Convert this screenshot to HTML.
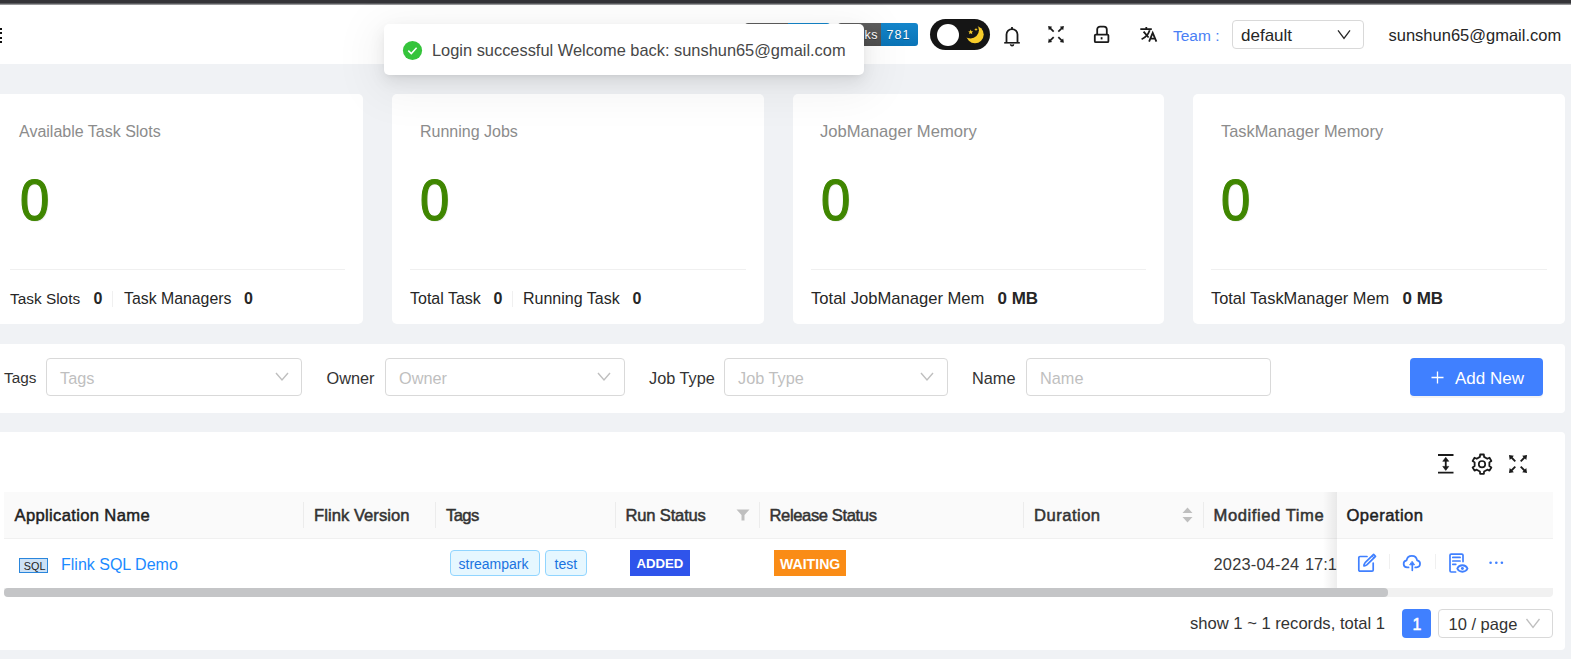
<!DOCTYPE html>
<html><head><meta charset="utf-8">
<style>
*{box-sizing:border-box;margin:0;padding:0}
html,body{width:1571px;height:659px;overflow:hidden;background:#f0f2f5;font-family:"Liberation Sans",sans-serif;color:rgba(0,0,0,.85)}
.a{position:absolute}
.t{position:absolute;white-space:nowrap;line-height:1}
.topbar{left:0;top:0;width:1571px;height:5px;background:linear-gradient(#343438 0,#343438 3px,#5c5d61 3px,#56575b 4px,#d8d8d8 5px)}
.header{left:0;top:5px;width:1571px;height:59px;background:#fff}
.card{background:#fff;border-radius:5px;top:94px;height:230px}
.ctitle{font-size:16px;color:#8c8c8c}
.cbig{font-size:57px;color:#3f8600;-webkit-text-stroke:1.2px #3f8600;text-shadow:1px 1px 1px rgba(0,0,0,.12);transform:scaleX(.925);transform-origin:0 0}
.cdiv{height:1px;background:#f0f0f0;top:269px}
.cfoot{font-size:16px;color:#262626}
.b{font-weight:bold}
.sel{border:1px solid #d9d9d9;border-radius:4px;background:#fff}
.ph{color:#bfbfbf;font-size:16.3px}
.lbl{font-size:16.3px;color:#333}
.th{font-size:16.6px;color:#333;-webkit-text-stroke:.5px currentColor;letter-spacing:.25px}
.sep{width:1px;background:#ececec}
</style></head>
<body>
<div class="a topbar"></div>
<div class="a header"></div>
<!-- hamburger sliver -->
<div class="a" style="left:0;top:27.9px;width:2px;height:1.7px;background:#111"></div>
<div class="a" style="left:0;top:32.4px;width:2px;height:1.7px;background:#111"></div>
<div class="a" style="left:0;top:36.9px;width:2px;height:1.7px;background:#111"></div>
<div class="a" style="left:0;top:41.4px;width:2px;height:1.7px;background:#111"></div>

<!-- badges behind toast -->
<div class="a" style="left:745px;top:23px;width:43px;height:23px;background:linear-gradient(#5e5e5e,#4e4e4e);border-radius:3px 0 0 3px"></div>
<div class="a" style="left:788px;top:23px;width:42px;height:23px;background:linear-gradient(#1486cb,#0a73b6);border-radius:0 3px 3px 0"></div>
<div class="a" style="left:838px;top:23px;width:43px;height:23px;background:linear-gradient(#5e5e5e,#4e4e4e);border-radius:3px 0 0 3px"></div>
<div class="a" style="left:881px;top:23px;width:37px;height:23px;background:linear-gradient(#1486cb,#0a73b6);border-radius:0 3px 3px 0"></div>
<div class="t" style="left:848px;top:28.5px;font-size:12.5px;letter-spacing:.6px;color:#fff;text-shadow:0 1px 0 rgba(1,1,1,.3)">forks</div>
<div class="t" style="left:886.5px;top:28.5px;font-size:12.5px;letter-spacing:1.1px;color:#fff;text-shadow:0 1px 0 rgba(1,1,1,.3)">781</div>

<!-- dark switch -->
<div class="a" style="left:930px;top:19px;width:60px;height:31px;border-radius:16px;background:#151515"></div>
<div class="a" style="left:937px;top:24px;width:22px;height:22px;border-radius:50%;background:#fff"></div>
<svg class="a" style="left:961.5px;top:22px" width="24" height="24" viewBox="0 0 24 24">
<defs><mask id="mm"><rect width="24" height="24" fill="#fff"/><circle cx="8.6" cy="8.2" r="8.3" fill="#000"/></mask></defs>
<circle cx="13" cy="12.5" r="8.7" fill="#f8cd2a" mask="url(#mm)"/>
<path d="M8.7 7.6l.75 1.6 1.75.2-1.3 1.15.4 1.75-1.6-.95-1.6.95.4-1.75-1.3-1.15 1.75-.2z" fill="#f8cd2a"/>
<path d="M14 5.8l.5 1.3 1.3.4-1.3.4-.5 1.3-.5-1.3-1.3-.4 1.3-.4z" fill="#f8cd2a"/>
</svg>

<!-- header icons -->
<svg class="a" style="left:0;top:0;overflow:visible" width="1" height="1" fill="none" stroke="#1a1a1a" stroke-width="1.8">
<path d="M1012 27v2.2"/><path d="M1006.5 43V34.6a5.5 5.5 0 0 1 11 0V43"/><path d="M1004.2 42.8h15.6" stroke-width="1.6"/><path d="M1010.6 44.2a1.45 1.45 0 0 0 2.9 0" stroke-width="1.6"/>
</svg>

<svg class="a" style="left:0;top:0;overflow:visible" width="1" height="1" fill="none" stroke="#1a1a1a" stroke-width="1.8">
<path d="M1097.2 34.2V29.5a2.9 2.9 0 0 1 2.9-2.9h3.8a2.9 2.9 0 0 1 2.9 2.9V34.2"/><rect x="1094.8" y="34.6" width="13.6" height="7.6" rx="1"/><path d="M1101.6 37.2v2.2"/>
</svg>
<svg class="a" style="left:0;top:0;overflow:visible" width="1" height="1" fill="none" stroke="#1a1a1a" stroke-width="1.8">
<path d="M1140.3 29.2H1151.8M1146.3 27V29"/><path d="M1143.6 31.6L1148.6 37.5M1149.7 30.2Q1147.5 36.6 1141.6 39.3"/>
<path d="M1149.1 41.6L1152.7 32.9L1156.4 41.6M1150.4 38.6H1155"/>
</svg>
<div class="t" style="left:1173px;top:28px;font-size:15.5px;color:#4a80f5">Team :</div>
<div class="a sel" style="left:1232px;top:20px;width:132px;height:29px"></div>
<div class="t" style="left:1241px;top:26.5px;font-size:17px;color:#262626">default</div>
<svg class="a" style="left:1336px;top:28px" width="16" height="12" viewBox="0 0 16 12" fill="none" stroke="#262626" stroke-width="1.3"><path d="M2 2.3l6 8 6-8"/></svg>
<div class="t" style="left:1388.5px;top:27px;font-size:16.5px;color:#262626">sunshun65@gmail.com</div>

<!-- cards -->
<div class="a card" style="left:-9px;width:372px"></div>
<div class="a card" style="left:392px;width:372px"></div>
<div class="a card" style="left:793px;width:371px"></div>
<div class="a card" style="left:1193px;width:372px"></div>

<div class="t ctitle" style="left:19px;top:123.5px">Available Task Slots</div>
<div class="t ctitle" style="left:420px;top:123.5px">Running Jobs</div>
<div class="t ctitle" style="left:820px;top:123.5px;font-size:16.6px">JobManager Memory</div>
<div class="t ctitle" style="left:1221px;top:123px;font-size:16.4px">TaskManager Memory</div>

<div class="t cbig" style="left:20px;top:172px">0</div>
<div class="t cbig" style="left:419.5px;top:172px">0</div>
<div class="t cbig" style="left:821px;top:172px">0</div>
<div class="t cbig" style="left:1220.5px;top:172px">0</div>

<div class="a cdiv" style="left:10px;width:335px"></div>
<div class="a cdiv" style="left:410px;width:336px"></div>
<div class="a cdiv" style="left:811px;width:335px"></div>
<div class="a cdiv" style="left:1211px;width:336px"></div>

<div class="t cfoot" style="left:10px;top:290.5px;font-size:15.4px">Task Slots</div>
<div class="t cfoot b" style="left:93.5px;top:290.5px">0</div>
<div class="a sep" style="left:112px;top:291px;height:16px;background:#f0f0f0"></div>
<div class="t cfoot" style="left:124px;top:290.5px;font-size:15.85px">Task Managers</div>
<div class="t cfoot b" style="left:244px;top:290.5px">0</div>

<div class="t cfoot" style="left:410px;top:290.5px">Total Task</div>
<div class="t cfoot b" style="left:493.5px;top:290.5px">0</div>
<div class="a sep" style="left:512px;top:291px;height:16px;background:#f0f0f0"></div>
<div class="t cfoot" style="left:523px;top:290.5px">Running Task</div>
<div class="t cfoot b" style="left:632.5px;top:290.5px">0</div>

<div class="t cfoot" style="left:811px;top:290.5px;font-size:16.6px">Total JobManager Mem</div>
<div class="t cfoot b" style="left:997.5px;top:290px;font-size:17px">0 MB</div>

<div class="t cfoot" style="left:1211px;top:290px;font-size:16.4px">Total TaskManager Mem</div>
<div class="t cfoot b" style="left:1402.5px;top:290px;font-size:17px">0 MB</div>

<!-- search panel -->
<div class="a" style="left:-9px;top:344px;width:1574px;height:69px;background:#fff;border-radius:4px"></div>
<div class="t lbl" style="left:4px;top:370.3px;font-size:15.3px">Tags</div>
<div class="a sel" style="left:46px;top:358px;width:256px;height:38px"></div>
<div class="t ph" style="left:60px;top:370.3px">Tags</div>
<div class="t lbl" style="left:326.5px;top:370.3px">Owner</div>
<div class="a sel" style="left:385px;top:358px;width:240px;height:38px"></div>
<div class="t ph" style="left:399px;top:370.3px">Owner</div>
<div class="t lbl" style="left:649px;top:370.3px">Job Type</div>
<div class="a sel" style="left:724px;top:358px;width:224px;height:38px"></div>
<div class="t ph" style="left:738px;top:370.3px">Job Type</div>
<div class="t lbl" style="left:972px;top:370.3px">Name</div>
<div class="a sel" style="left:1026px;top:358px;width:245px;height:38px"></div>
<div class="t ph" style="left:1040px;top:370.3px">Name</div>
<svg class="a" style="left:274px;top:371px" width="16" height="12" viewBox="0 0 16 12" fill="none" stroke="#bfbfbf" stroke-width="1.4"><path d="M2 2l6 7 6-7"/></svg>
<svg class="a" style="left:596px;top:371px" width="16" height="12" viewBox="0 0 16 12" fill="none" stroke="#bfbfbf" stroke-width="1.4"><path d="M2 2l6 7 6-7"/></svg>
<svg class="a" style="left:919px;top:371px" width="16" height="12" viewBox="0 0 16 12" fill="none" stroke="#bfbfbf" stroke-width="1.4"><path d="M2 2l6 7 6-7"/></svg>
<div class="a" style="left:1410px;top:358px;width:133px;height:38px;background:#4080ff;border-radius:4px;box-shadow:0 2px 0 rgba(0,0,0,.045)"></div>
<svg class="a" style="left:1431px;top:371px" width="13" height="13" viewBox="0 0 13 13" fill="none" stroke="#fff" stroke-width="1.3"><path d="M6.5 0.5v12M0.5 6.5h12"/></svg>
<div class="t" style="left:1455px;top:370px;font-size:17px;color:#fff">Add New</div>

<!-- table panel -->
<div class="a" style="left:-9px;top:432px;width:1574px;height:218px;background:#fff;border-radius:4px"></div>
<!-- toolbar icons -->
<svg class="a" style="left:0;top:0;overflow:visible" width="1" height="1" fill="none">
<path d="M1438 455h15.5M1438 472.7h15.5M1445.75 460v8" stroke="#1a1a1a" stroke-width="1.8"/>
<path d="M1445.75 457.3l3 4h-6z M1445.75 470.4l3-4h-6z" fill="#1a1a1a" stroke="#1a1a1a" stroke-width=".6" stroke-linejoin="round"/>
<path d="M1479.91 456.89 L1480.14 454.48 L1483.86 454.48 L1484.09 456.89 L1487.28 458.74 L1489.49 457.73 L1491.35 460.94 L1489.37 462.36 L1489.37 466.04 L1491.35 467.46 L1489.49 470.67 L1487.28 469.66 L1484.09 471.51 L1483.86 473.92 L1480.14 473.92 L1479.91 471.51 L1476.72 469.66 L1474.51 470.67 L1472.65 467.46 L1474.63 466.04 L1474.63 462.36 L1472.65 460.94 L1474.51 457.73 L1476.72 458.74Z" stroke="#1a1a1a" stroke-width="1.8" stroke-linejoin="round"/>
<circle cx="1482" cy="464.2" r="3.2" stroke="#1a1a1a" stroke-width="1.7"/>
<path d="M1509.00 455.00L1513.90 455.70L1509.70 459.90Z" fill="#1a1a1a"/>
<path d="M1511.00 457.00L1515.30 461.30" stroke="#1a1a1a" stroke-width="1.8"/>
<path d="M1527.00 455.00L1522.10 455.70L1526.30 459.90Z" fill="#1a1a1a"/>
<path d="M1525.00 457.00L1520.70 461.30" stroke="#1a1a1a" stroke-width="1.8"/>
<path d="M1509.00 473.00L1513.90 472.30L1509.70 468.10Z" fill="#1a1a1a"/>
<path d="M1511.00 471.00L1515.30 466.70" stroke="#1a1a1a" stroke-width="1.8"/>
<path d="M1527.00 473.00L1522.10 472.30L1526.30 468.10Z" fill="#1a1a1a"/>
<path d="M1525.00 471.00L1520.70 466.70" stroke="#1a1a1a" stroke-width="1.8"/>
<path d="M1048.10 26.10L1052.20 26.80L1048.80 30.20Z" fill="#1a1a1a"/>
<path d="M1050.10 28.10L1053.70 31.70" stroke="#1a1a1a" stroke-width="1.7"/>
<path d="M1063.90 26.10L1059.80 26.80L1063.20 30.20Z" fill="#1a1a1a"/>
<path d="M1061.90 28.10L1058.30 31.70" stroke="#1a1a1a" stroke-width="1.7"/>
<path d="M1048.10 42.70L1052.20 42.00L1048.80 38.60Z" fill="#1a1a1a"/>
<path d="M1050.10 40.70L1053.70 37.10" stroke="#1a1a1a" stroke-width="1.7"/>
<path d="M1063.90 42.70L1059.80 42.00L1063.20 38.60Z" fill="#1a1a1a"/>
<path d="M1061.90 40.70L1058.30 37.10" stroke="#1a1a1a" stroke-width="1.7"/>

</svg>
<!-- table header -->
<div class="a" style="left:4px;top:492px;width:1549px;height:46px;background:#fafafa"></div>
<div class="a" style="left:4px;top:538px;width:1549px;height:1px;background:#f0f0f0"></div>
<div class="a sep" style="left:302.5px;top:502px;height:26px"></div>
<div class="a sep" style="left:434.5px;top:502px;height:26px"></div>
<div class="a sep" style="left:614.5px;top:502px;height:26px"></div>
<div class="a sep" style="left:758.5px;top:502px;height:26px"></div>
<div class="a sep" style="left:1022.5px;top:502px;height:26px"></div>
<div class="a sep" style="left:1202.5px;top:502px;height:26px"></div>

<div class="t th" style="left:14.5px;top:508px;color:#1f1f1f;letter-spacing:.34px">Application Name</div>
<div class="t th" style="left:314px;top:508px;letter-spacing:.04px">Flink Version</div>
<div class="t th" style="left:446px;top:508px;letter-spacing:-.6px">Tags</div>
<div class="t th" style="left:625.5px;top:508px;letter-spacing:-.19px">Run Status</div>
<div class="t th" style="left:769.5px;top:508px;letter-spacing:-.39px">Release Status</div>
<div class="t th" style="left:1034px;top:508px;letter-spacing:.48px">Duration</div>
<div class="t th" style="left:1213.5px;top:508px;letter-spacing:.58px">Modified Time</div>
<svg class="a" style="left:736px;top:509px" width="14" height="12" viewBox="0 0 14 12"><path d="M0.5 0.5h13l-5 5.5v5.5h-3v-5.5z" fill="#bfbfbf"/></svg>
<svg class="a" style="left:1182px;top:507px" width="11" height="16" viewBox="0 0 11 16"><path d="M5.5 0.5l5 5.5h-10z M5.5 15.5l5-5.5h-10z" fill="#bfbfbf"/></svg>

<!-- row -->
<div class="a" style="left:19px;top:558px;width:29px;height:15px;background:#cde1f5;border:1.2px solid #2a86dc"></div>
<div class="t" style="left:23.8px;top:561px;font-size:10.8px;color:#222">SQL</div>
<div class="t" style="left:61px;top:556.5px;font-size:16px;color:#1b8aff">Flink SQL Demo</div>
<div class="a" style="left:450px;top:550px;width:90px;height:26px;background:#e6f7ff;border:1px solid #91d5ff;border-radius:4px"></div>
<div class="t" style="left:458.5px;top:557px;font-size:14px;color:#1a73e0">streampark</div>
<div class="a" style="left:545px;top:550px;width:42px;height:26px;background:#e6f7ff;border:1px solid #91d5ff;border-radius:4px"></div>
<div class="t" style="left:554.5px;top:557px;font-size:14px;color:#1a73e0">test</div>
<div class="a" style="left:630px;top:550px;width:60px;height:26px;background:#2f54eb"></div>
<div class="t" style="left:636.5px;top:557px;font-size:13.2px;font-weight:bold;color:#fff">ADDED</div>
<div class="a" style="left:774px;top:550px;width:72px;height:26px;background:#fa8c16"></div>
<div class="t" style="left:780px;top:557px;font-size:14.1px;font-weight:bold;color:#fff">WAITING</div>
<div class="a" style="left:1203px;top:539px;width:134px;height:49px;overflow:hidden">
<div class="t" style="left:10.5px;top:16.5px;font-size:16.4px;color:#383838;letter-spacing:.2px">2023-04-24</div><div class="t" style="left:102px;top:16.5px;font-size:16.4px;color:#383838;letter-spacing:0px">17:14:36</div>
</div>

<!-- fixed op column -->
<div class="a" style="left:1323px;top:492px;width:14px;height:96px;background:linear-gradient(90deg,rgba(0,0,0,0),rgba(0,0,0,.07))"></div>
<div class="a" style="left:1337px;top:492px;width:216px;height:46px;background:#fafafa"></div>
<div class="a" style="left:1337px;top:538px;width:216px;height:1px;background:#f0f0f0"></div>
<div class="a" style="left:1337px;top:539px;width:216px;height:49px;background:#fff"></div>
<div class="t th" style="left:1346.5px;top:508px;color:#1f1f1f;letter-spacing:.45px">Operation</div>
<svg class="a" style="left:0;top:0;overflow:visible" width="1" height="1" fill="none" stroke="#4080ff" stroke-width="1.7" stroke-linecap="round" stroke-linejoin="round">
<path d="M1367 556.5H1360a1.2 1.2 0 0 0-1.2 1.2V570a1.2 1.2 0 0 0 1.2 1.2h12a1.2 1.2 0 0 0 1.2-1.2V563"/>
<path d="M1373.6 554.4l1.9 1.9-8.4 8.4q-1.6 1.4-3.2 1.2q-.2-1.6 1.2-3.2z"/><path d="M1372.3 556.2l1.6 1.6" stroke-width="1.2"/>
<path d="M1408.6 567.4h-1.5a3.55 3.55 0 0 1-.5-7.05a5.3 5.3 0 0 1 10.5 0a3.55 3.55 0 0 1-.4 7.05h-1.5"/>
<path d="M1412.3 570.3v-6"/><path d="M1412.3 561.6l2.3 3.2h-4.6z" fill="#4080ff" stroke-width=".9"/>
<path d="M1455.6 572h-4.4a1.2 1.2 0 0 1-1.2-1.2V555.3a1.2 1.2 0 0 1 1.2-1.2h10.6a1.2 1.2 0 0 1 1.2 1.2V561.6"/>
<path d="M1452.8 557.4h7.3M1452.8 561h7.3M1452.8 564.3h3"/>
<path d="M1457.3 568.5C1459.1 564.2 1465.7 564.2 1467.5 568.5C1465.7 572.8 1459.1 572.8 1457.3 568.5Z" stroke-width="1.9"/>
<circle cx="1462.4" cy="568.5" r="1.45" fill="#4080ff" stroke="none"/>
<circle cx="1490.6" cy="562.8" r="1.3" fill="#4080ff" stroke="none"/>
<circle cx="1496.3" cy="562.8" r="1.3" fill="#4080ff" stroke="none"/>
<circle cx="1501.9" cy="562.8" r="1.3" fill="#4080ff" stroke="none"/>
</svg>
<div class="a sep" style="left:1389px;top:554px;height:15px;background:#f0f0f0"></div>
<div class="a sep" style="left:1435px;top:554px;height:15px;background:#f0f0f0"></div>

<!-- scrollbar -->
<div class="a" style="left:4px;top:588px;width:1549px;height:9px;background:#f1f1f1;border-radius:0 0 4px 4px"></div>
<div class="a" style="left:4px;top:588px;width:1384px;height:9px;background:#c4c5c7;border-radius:4px"></div>

<!-- pagination -->
<div class="t" style="left:1190px;top:616px;font-size:16.6px;color:#333">show 1 ~ 1 records, total 1</div>
<div class="a" style="left:1402px;top:609px;width:29px;height:29px;background:#4080ff;border-radius:4px"></div>
<div class="t" style="left:1412.5px;top:616.5px;font-size:16px;color:#fff;-webkit-text-stroke:.5px #fff">1</div>
<div class="a sel" style="left:1438px;top:609px;width:115px;height:29px"></div>
<div class="t" style="left:1448.5px;top:616px;font-size:16.5px;color:#333">10 / page</div>
<svg class="a" style="left:1525px;top:618px" width="16" height="11" viewBox="0 0 16 11" fill="none" stroke="#bfbfbf" stroke-width="1.3"><path d="M1.5 1l6.5 8.5 6.5-8.5"/></svg>
<!-- toast -->
<div class="a" style="left:384px;top:24px;width:480px;height:51px;background:#fff;border-radius:5px;box-shadow:0 3px 6px -4px rgba(0,0,0,.12),0 6px 16px 0 rgba(0,0,0,.08),0 9px 44px 12px rgba(0,0,0,.05)"></div>
<svg class="a" style="left:402px;top:40px" width="21" height="21" viewBox="0 0 21 21"><circle cx="10.5" cy="10.5" r="9.6" fill="#35c43b"/><path d="M6.3 10.6l3 3 5.3-5.8" fill="none" stroke="#fff" stroke-width="1.5"/></svg>
<div class="t" style="left:432px;top:42.3px;font-size:16.4px;color:#474747">Login successful Welcome back: sunshun65@gmail.com</div>

</body></html>
